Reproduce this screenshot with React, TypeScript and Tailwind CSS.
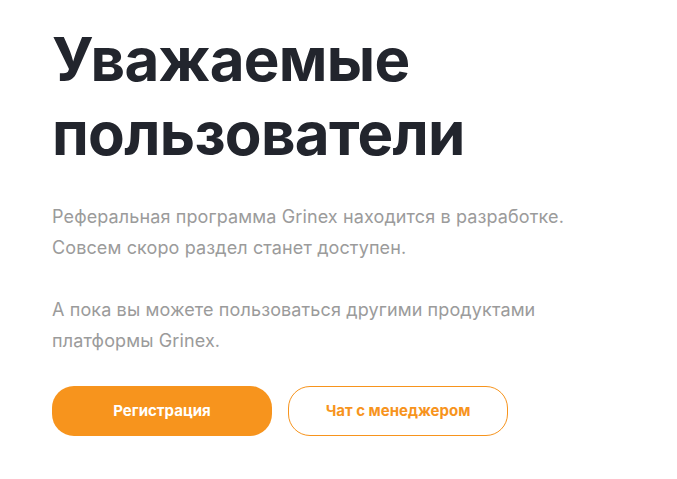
export default function App() {
  return (
    <div className="min-h-screen bg-white font-['Inter','Noto_Sans',sans-serif]">
      <div className="px-[52px] pt-[22px]">
        <h1 className="text-[60px] font-bold leading-[74px] tracking-[-0.7px] text-[#22252d]">
          Уважаемые
          <br />
          пользователи
        </h1>
        <div className="mt-[31px] text-[18px] leading-[31px] tracking-[0.12px] text-[#9b9b9b]">
          <p>
            Реферальная программа Grinex находится в разработке.
            <br />
            Совсем скоро раздел станет доступен.
          </p>
          <p className="mt-[31px]">
            А пока вы можете пользоваться другими продуктами
            <br />
            платформы Grinex.
          </p>
        </div>
        <div className="mt-[30px] flex gap-4">
          <button className="h-[50px] w-[220px] rounded-[22px] bg-[#f7941d] text-[15px] font-bold text-white">
            Регистрация
          </button>
          <button className="h-[50px] w-[220px] rounded-[22px] border border-[#f7941d] bg-white text-[15px] font-bold text-[#f7941d]">
            Чат с менеджером
          </button>
        </div>
      </div>
    </div>
  );
}
